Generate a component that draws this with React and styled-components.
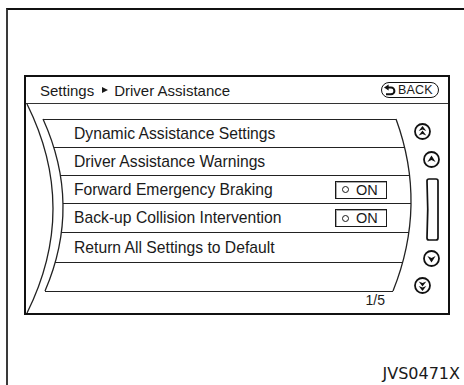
import React from "react";
import styled, { createGlobalStyle } from "styled-components";

const GlobalStyle = createGlobalStyle`
  html, body { margin: 0; padding: 0; background: #fff; overflow: hidden; }
  body { font-family: "Liberation Sans", Arial, sans-serif; color: #1a1a1a; }
`;

const Frame = styled.div`
  box-sizing: border-box;
  margin: 8px 0 0 6px;
  height: 377px;
  border-top: 2px solid #111;
  border-left: 2px solid #3a3a3a;
  padding: 65px 4px 0 16px;
  display: flex;
  flex-direction: column;
`;

const Panel = styled.div`
  box-sizing: border-box;
  width: 426px;
  height: 240px;
  border: 2px solid #111;
  display: flex;
  flex-direction: column;
`;

const Header = styled.div`
  height: 26px;
  border-bottom: 1px solid #333;
  display: flex;
  align-items: center;
  justify-content: space-between;
  padding: 0 9px 0 14px;
  font-size: 15px;
`;

const Crumb = styled.div`
  display: flex;
  align-items: center;
`;

const Arrow = styled.span`
  display: inline-block;
  width: 0;
  height: 0;
  border-left: 6px solid #1a1a1a;
  border-top: 3.5px solid transparent;
  border-bottom: 3.5px solid transparent;
  margin: 0 6px 0 8px;
`;

const BackButton = styled.div`
  box-sizing: border-box;
  width: 58px;
  height: 16px;
  border: 1.6px solid #111;
  border-radius: 8px;
  display: flex;
  align-items: center;
  gap: 2px;
  padding: 0 0 0 1px;
  font-size: 12.5px;
  letter-spacing: 0.2px;
`;

const Body = styled.div`
  position: relative;
  flex: 1;
  display: flex;
`;

const Drum = styled.svg`
  position: absolute;
  left: 0;
  top: 0;
  pointer-events: none;
`;

const ListCol = styled.div`
  width: 386px;
  padding-top: 15px;
  display: flex;
  flex-direction: column;
`;

const Rule = styled.div`
  height: 1px;
  background: #222;
  margin-left: ${(p) => p.$l}px;
  margin-right: ${(p) => p.$r}px;
`;

const Row = styled.div`
  box-sizing: border-box;
  height: ${(p) => p.$h}px;
  display: flex;
  align-items: center;
  justify-content: space-between;
  padding: 0 25px 0 48px;
  font-size: 15.7px;
`;

const Toggle = styled.div`
  box-sizing: border-box;
  width: 52px;
  height: 18px;
  border: 1.5px solid #1a1a1a;
  box-shadow: inset 1px 1px 0 #aaa;
  display: flex;
  align-items: center;
  padding-left: 6px;
  gap: 7px;
  font-size: 14.5px;
`;

const Dot = styled.span`
  box-sizing: border-box;
  width: 7px;
  height: 7px;
  border: 1.4px solid #1a1a1a;
  border-radius: 50%;
`;

const Pager = styled.div`
  text-align: right;
  padding-right: 27px;
  font-size: 14px;
  line-height: 16px;
`;

const ScrollCol = styled.div`
  width: 36px;
  display: flex;
  flex-direction: column;
`;

const ScrollItem = styled.div`
  margin-left: ${(p) => p.$x}px;
  margin-top: ${(p) => p.$top}px;
  display: flex;
`;

const Caption = styled.div`
  margin-top: 51px;
  text-align: right;
  font-family: "DejaVu Sans", sans-serif;
  font-size: 16px;
  line-height: 16px;
  color: #1a1a1a;
`;

const rows = [
  { label: "Dynamic Assistance Settings", h: 27 },
  { label: "Driver Assistance Warnings", h: 27 },
  { label: "Forward Emergency Braking", h: 27, on: true },
  { label: "Back-up Collision Intervention", h: 28, on: true },
  { label: "Return All Settings to Default", h: 29 },
  { label: "", h: 28 },
];

const rules = [
  [17, 16],
  [28, 8],
  [34, 3],
  [37, 1],
  [35, 3],
  [29, 9],
  [19, 19],
];

function ArrowCircle({ dir, double }) {
  const up = double
    ? "M8.5 3 L12.3 8 L8.5 6.4 L4.7 8 Z M8.5 7.6 L12.3 12.6 L8.5 11 L4.7 12.6 Z"
    : "M8.5 4.6 L12.6 11 L8.5 9.1 L4.4 11 Z";
  return (
    <svg width="17" height="17" viewBox="0 0 17 17">
      <circle cx="8.5" cy="8.5" r="7.5" fill="#fff" stroke="#111" strokeWidth="1.8" />
      <g transform={dir === "down" ? "rotate(180 8.5 8.5)" : undefined}>
        <path d={up} fill="#111" />
      </g>
    </svg>
  );
}

function Track() {
  return (
    <svg width="13" height="63" viewBox="0 0 13 63">
      <path
        d="M3 1 H10 Q12 1 12 3 V60 Q12 62 10 62 H3 Q1 62 1 60 Q2.5 31.5 1 3 Q1 1 3 1 Z"
        fill="#fff"
        stroke="#111"
        strokeWidth="1.7"
      />
    </svg>
  );
}

function BackIcon() {
  return (
    <svg width="13" height="13" viewBox="0 0 13 13">
      <path d="M5 3.5 H8 A3.4 3.4 0 0 1 8 10.3 H3" fill="none" stroke="#111" strokeWidth="2" />
      <path d="M1 3.5 L5.6 0.6 L5.6 6.4 Z" fill="#111" />
    </svg>
  );
}

export default function App() {
  return (
    <>
      <GlobalStyle />
      <Frame>
        <Panel>
          <Header>
            <Crumb>
              Settings<Arrow />Driver Assistance
            </Crumb>
            <BackButton>
              <BackIcon />
              BACK
            </BackButton>
          </Header>
          <Body>
            <Drum width="422" height="209" viewBox="0 0 422 209">
              <g fill="none" stroke="#222" strokeWidth="1.3">
                <path d="M1 0 Q53 104.5 1 209" />
                <path d="M17 15 Q56 101 19 187" />
                <path d="M370 15 Q401.5 101 367 187" />
              </g>
            </Drum>
            <ListCol>
              {rows.map((r, i) => (
                <React.Fragment key={i}>
                  <Rule $l={rules[i][0]} $r={rules[i][1]} />
                  <Row $h={r.h}>
                    <span>{r.label}</span>
                    {r.on && (
                      <Toggle>
                        <Dot />
                        ON
                      </Toggle>
                    )}
                  </Row>
                </React.Fragment>
              ))}
              <Rule $l={rules[6][0]} $r={rules[6][1]} />
              <Pager>1/5</Pager>
            </ListCol>
            <ScrollCol>
              <ScrollItem $x={2} $top={19}>
                <ArrowCircle dir="up" double />
              </ScrollItem>
              <ScrollItem $x={11} $top={11}>
                <ArrowCircle dir="up" />
              </ScrollItem>
              <ScrollItem $x={14} $top={10}>
                <Track />
              </ScrollItem>
              <ScrollItem $x={11} $top={9}>
                <ArrowCircle dir="down" />
              </ScrollItem>
              <ScrollItem $x={2} $top={10}>
                <ArrowCircle dir="down" double />
              </ScrollItem>
            </ScrollCol>
          </Body>
        </Panel>
        <Caption>JVS0471X</Caption>
      </Frame>
    </>
  );
}
